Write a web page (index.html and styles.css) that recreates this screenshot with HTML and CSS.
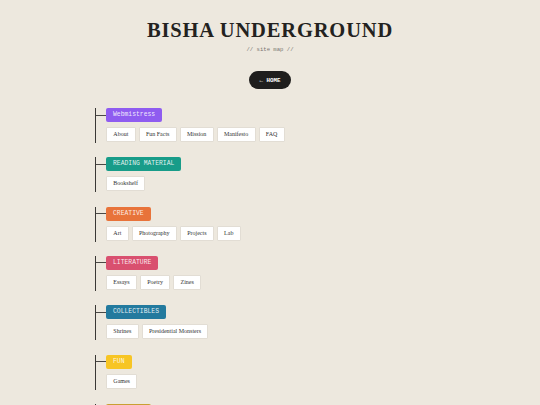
FILE: index.html
```html
<!DOCTYPE html>
<html lang="en">
<head>
<meta charset="utf-8">
<title>Bisha Underground — site map</title>
<link rel="stylesheet" href="styles.css">
</head>
<body>
<header class="masthead">
  <h1 class="title">BISHA UNDERGROUND</h1>
  <p class="subtitle">// site map //</p>
  <a class="home" href="#">← HOME</a>
</header>
<main class="tree">
  <section class="branch">
    <div class="branch-head"><span class="tag tag--purple">Webmistress</span></div>
    <ul class="leaves">
      <li><a class="leaf" href="#">About</a></li>
      <li><a class="leaf" href="#">Fun Facts</a></li>
      <li><a class="leaf" href="#">Mission</a></li>
      <li><a class="leaf" href="#">Manifesto</a></li>
      <li><a class="leaf" href="#">FAQ</a></li>
    </ul>
  </section>
  <section class="branch">
    <div class="branch-head"><span class="tag tag--teal">READING MATERIAL</span></div>
    <ul class="leaves">
      <li><a class="leaf" href="#">Bookshelf</a></li>
    </ul>
  </section>
  <section class="branch">
    <div class="branch-head"><span class="tag tag--orange">CREATIVE</span></div>
    <ul class="leaves">
      <li><a class="leaf" href="#">Art</a></li>
      <li><a class="leaf" href="#">Photography</a></li>
      <li><a class="leaf" href="#">Projects</a></li>
      <li><a class="leaf" href="#">Lab</a></li>
    </ul>
  </section>
  <section class="branch">
    <div class="branch-head"><span class="tag tag--pink">LITERATURE</span></div>
    <ul class="leaves">
      <li><a class="leaf" href="#">Essays</a></li>
      <li><a class="leaf" href="#">Poetry</a></li>
      <li><a class="leaf" href="#">Zines</a></li>
    </ul>
  </section>
  <section class="branch">
    <div class="branch-head"><span class="tag tag--blue">COLLECTIBLES</span></div>
    <ul class="leaves">
      <li><a class="leaf" href="#">Shrines</a></li>
      <li><a class="leaf" href="#">Presidential Monsters</a></li>
    </ul>
  </section>
  <section class="branch">
    <div class="branch-head"><span class="tag tag--yellow">FUN</span></div>
    <ul class="leaves">
      <li><a class="leaf" href="#">Games</a></li>
    </ul>
  </section>
  <section class="branch">
    <div class="branch-head"><span class="tag tag--gold">ARCHIVES</span></div>
    <ul class="leaves">
      <li><a class="leaf" href="#">Old Stuff</a></li>
    </ul>
  </section>
</main>
</body>
</html>
```
FILE: styles.css
```css
html, body {
  margin: 0;
  padding: 0;
}
body {
  background: #ede8de;
  color: #222;
  font-family: "Liberation Serif", "Times New Roman", serif;
}
.masthead {
  display: flex;
  flex-direction: column;
  align-items: center;
  padding-top: 18px;
}
.title {
  margin: 0;
  font-family: "Liberation Serif", serif;
  font-weight: 700;
  font-size: 20.5px;
  line-height: 25px;
  letter-spacing: 0.85px;
  color: #232220;
}
.subtitle {
  margin: 3px 0 0;
  font-family: "Liberation Mono", monospace;
  font-size: 5.6px;
  line-height: 8px;
  color: #7a7672;
}
.home {
  margin-top: 17px;
  display: flex;
  align-items: center;
  height: 18px;
  padding: 0 11px;
  border-radius: 9px;
  background: #1f1e1d;
  color: #fff;
  font-family: "Liberation Mono", monospace;
  font-weight: 700;
  font-size: 5.8px;
  text-decoration: none;
}
.tree {
  width: 350px;
  margin: 19px auto 0;
  display: flex;
  flex-direction: column;
  gap: 14.33px;
}
.branch {
  border-left: 1px solid #3a3835;
  padding-bottom: 1px;
}
.branch-head {
  display: flex;
  align-items: center;
}
.branch-head::before {
  content: "";
  width: 10px;
  height: 1px;
  background: #4a4845;
}
.tag {
  display: block;
  padding: 0 7px;
  border-radius: 2px;
  font-family: "Liberation Mono", monospace;
  font-size: 6.4px;
  line-height: 14px;
  color: rgba(255, 255, 255, 0.88);
}
.tag--purple { background: #8f5cf0; }
.tag--teal { background: #189c89; }
.tag--orange { background: #e8733a; }
.tag--pink { background: #d9506f; }
.tag--blue { background: #237a9e; }
.tag--yellow { background: #f7c524; }
.tag--gold { background: #c9a032; }
.leaves {
  display: flex;
  flex-wrap: wrap;
  gap: 3px;
  margin: 5px 0 0 10px;
  padding: 0;
  list-style: none;
}
.leaf {
  display: block;
  padding: 0 6.3px;
  background: #fff;
  border: 1px solid #e2ddd4;
  border-radius: 1px;
  font-family: "Liberation Serif", serif;
  font-size: 6px;
  line-height: 13px;
  color: #333;
  text-decoration: none;
}
```
